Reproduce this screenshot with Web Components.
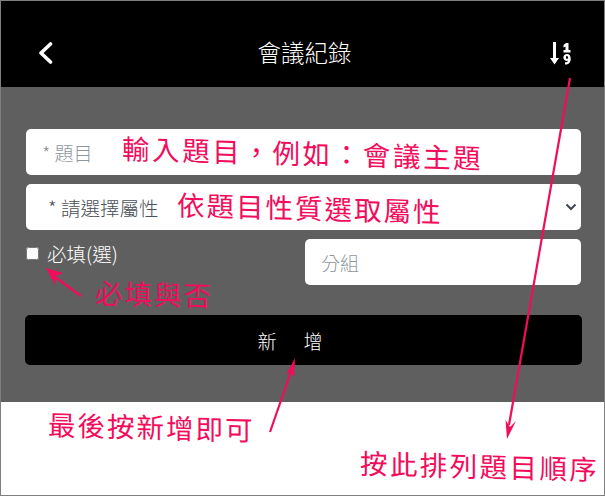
<!DOCTYPE html>
<html lang="zh-Hant">
<head>
<meta charset="utf-8">
<title>會議紀錄</title>
<style>
    html, body { margin: 0; padding: 0; background: #fff; }
    body { font-family: "Noto Sans CJK TC", "Liberation Sans", sans-serif; }
</style>
</head>
<body>
<app-frame>
    <app-header title="會議紀錄"></app-header>
    <form-panel>
        <text-field>* 題目</text-field>
        <select-field>* 請選擇屬性</select-field>
        <div style="display:grid;grid-template-columns:1fr 276px;height:46px">
            <check-field>必填(選)</check-field>
            <text-field>分組</text-field>
        </div>
        <add-button>新　增</add-button>
    </form-panel>
    <note-overlay>
        <note-text style="--x:122px;--y:133px;--sp:2.600px">輸入題目&#xFF0C;例如&#xFF1A;會議主題</note-text>
        <note-text style="--x:177px;--y:188px">依題目性質選取屬性</note-text>
        <note-text style="--x:95px;--y:274px">必填與否</note-text>
        <note-text style="--x:48px;--y:407px">最後按新增即可</note-text>
        <note-text style="--x:360px;--y:446px;--sp:2.400px">按此排列題目順序</note-text>
    </note-overlay>
</app-frame>

<script>
const define_el = (name, css, html) => {
    customElements.define(name, class extends HTMLElement {
        constructor() {
            super();
            this.attachShadow({ mode: 'open' });
            this.shadowRoot.innerHTML = `<style>${css}</style>${html}`;
        }
    });
};

define_el('app-frame', `
    :host {
        display: flex;
        flex-direction: column;
        position: relative;
        width: 605px;
        height: 496px;
        box-sizing: border-box;
        border: 1px solid #7f7f7f;
        background: #fff;
        overflow: hidden;
    }
`, `<slot></slot>`);

customElements.define('app-header', class extends HTMLElement {
    constructor() {
        super();
        this.attachShadow({ mode: 'open' });
        this.shadowRoot.innerHTML = `
        <style>
            :host {
                display: flex;
                align-items: center;
                justify-content: space-between;
                height: 86px;
                padding: 18px 32px 0 37px;
                box-sizing: border-box;
                background: #000;
                color: #fff;
            }
            h1 { margin: 0 0 2px 6px; font-size: 23.500px; font-weight: 300; line-height: 30px; }
            svg { display: block; }
        </style>
        <svg width="15" height="22" viewBox="0 0 15 22"><path d="M12.500 2 3 11l9.500 9" fill="none" stroke="#fff" stroke-width="3.600" stroke-linecap="round" stroke-linejoin="round"/></svg>
        <h1></h1>
        <svg width="22" height="23" viewBox="0 0 22 23" fill="#fff">
            <path d="M3 0h3v16h3l-4.500 6.500L0 16h3z"/>
            <path d="M13.500 3 16 1h2.500v7H20.500v2.500h-7V8h2V4.500l-2 1z"/>
            <path fill-rule="evenodd" d="M17 12c2.500 0 3.700 1.700 3.700 4.700 0 3.600-1.800 5.800-5.700 5.800v-2.200c1.600 0 2.600-.5 3-1.500-2.100.4-4.600-.4-4.600-3.300C13.400 13.400 14.800 12 17 12zm0 2.100c-.7 0-1.100.6-1.100 1.300 0 .9.600 1.300 1.200 1.300.4 0 .8-.1 1-.3 0-1.500-.4-2.300-1.100-2.300z"/>
        </svg>`;
        this.shadowRoot.querySelector('h1').textContent = this.getAttribute('title');
    }
});

define_el('form-panel', `
    :host {
        display: flex;
        flex-direction: column;
        gap: 9px;
        height: 315px;
        padding: 42px 23px 0 25px;
        box-sizing: border-box;
        background: #5f5f5f;
    }
`, `<slot></slot>`);

define_el('text-field', `
    :host {
        display: flex;
        align-items: center;
        height: 46px;
        padding-left: 16px;
        box-sizing: border-box;
        background: #fff;
        border-radius: 5px;
        color: #8f969d;
        font-size: 19px;
        font-weight: 300;
    }
`, `<slot></slot>`);

define_el('select-field', `
    :host {
        display: flex;
        align-items: center;
        justify-content: space-between;
        height: 46px;
        padding: 0 4px 0 22px;
        box-sizing: border-box;
        background: #fff;
        border-radius: 5px;
        color: #495057;
        font-size: 19.500px;
        font-weight: 300;
    }
    svg { display: block; }
`, `<slot></slot><svg width="12" height="8" viewBox="0 0 12 8"><path d="M1.500 1.500 6 6l4.500-4.500" fill="none" stroke="#3f464d" stroke-width="2"/></svg>`);

define_el('check-field', `
    :host {
        display: flex;
        align-items: flex-start;
        gap: 8px;
        color: #fff;
        font-size: 19.500px;
        font-weight: 300;
        line-height: 24px;
        padding-top: 3px;
    }
    input { width: 13px; height: 13px; margin: 5px 0 0 0; }
`, `<input type="checkbox"><span><slot></slot></span>`);

define_el('add-button', `
    :host {
        display: flex;
        align-items: center;
        justify-content: center;
        height: 50px;
        margin: 21px -1px 0;
        padding-right: 23px;
        background: #000;
        border-radius: 5px;
        color: #fff;
        font-size: 19px;
        font-weight: 300;
        letter-spacing: 4px;
    }
`, `<slot></slot>`);

define_el('note-overlay', `
    :host { position: absolute; left: -1px; top: -1px; width: 605px; height: 496px; pointer-events: none; }
    svg { position: absolute; left: 0; top: 0; }
`, `<svg width="605" height="496" viewBox="0 0 605 496" fill="#f20c5c" stroke="none">
        <path d="M570 78 509 425" stroke="#f20c5c" stroke-width="2.200" fill="none"/>
        <path d="M507 439 505.500 420 510 427 516 421z"/>
        <path d="M81 296 51 274" stroke="#f20c5c" stroke-width="2.200" fill="none"/>
        <path d="M46 268 63 273 56 276 55 285z"/>
        <path d="M270 432 293 366" stroke="#f20c5c" stroke-width="2.200" fill="none"/>
        <path d="M295 358 294 377 290 372 286 375z"/>
    </svg><slot></slot>`);

define_el('note-text', `
    :host {
        position: absolute;
        left: var(--x);
        top: var(--y);
        white-space: nowrap;
        color: #f20c5c;
        font-size: 27.500px;
        line-height: 38px;
        font-weight: 400;
        letter-spacing: var(--sp, 2px);
        transform: skewY(1.500deg);
    }
`, `<slot></slot>`);
</script>
</body>
</html>
